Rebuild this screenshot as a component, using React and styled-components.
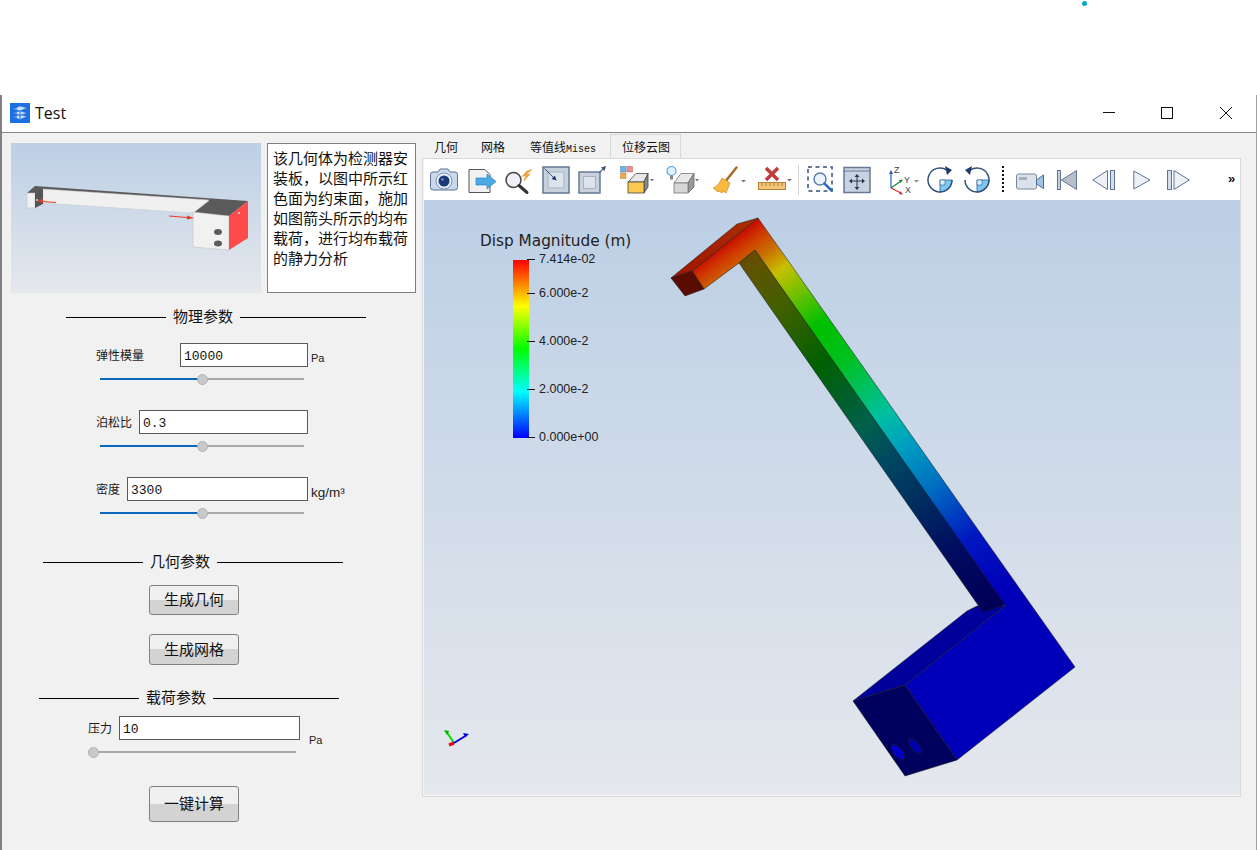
import styled, { createGlobalStyle } from 'styled-components';

const CJK = `"Noto Sans CJK SC", "Liberation Sans", sans-serif`;

const GlobalStyle = createGlobalStyle`
  html, body {
    margin: 0;
    padding: 0;
    background: #fff;
    font-family: ${CJK};
  }
`;

const Page = styled.div`
  position: relative;
  width: 1257px;
  height: 850px;
  padding-top: 95px;
  box-sizing: border-box;
  overflow: hidden;
`;

const TopDot = styled.span`
  position: absolute;
  left: 1082px;
  top: 1px;
  width: 5px;
  height: 5px;
  border-radius: 50%;
  background: #0aa6c8;
`;

const Window = styled.div`
  height: 755px;
  border-left: 2px solid #808085;
  border-right: 1px solid #a0a0a0;
  box-sizing: border-box;
  background: #f1f1f1;
`;

const TitleBar = styled.div`
  display: flex;
  align-items: center;
  height: 38px;
  box-sizing: border-box;
  padding: 0 0 2px 8px;
  background: #fff;
  border-bottom: 1px solid #85858d;
`;

const TitleText = styled.span`
  margin-left: 5px;
  font: 16px "Open Sans", "Liberation Sans", sans-serif;
  color: #111;
`;

const WindowControls = styled.div`
  display: flex;
  margin-left: auto;
  margin-right: 1px;
`;

const WindowButton = styled.svg`
  display: block;
  width: 59px;
  height: 14px;
  fill: none;
  stroke: #111;
  stroke-width: 1;
`;

const Body = styled.div`
  display: flex;
`;

const LeftPanel = styled.div`
  width: 420px;
  flex: none;
  padding-top: 10px;
  box-sizing: border-box;
`;

const IntroRow = styled.div`
  display: flex;
  gap: 6px;
  margin-left: 9px;
`;

const Thumbnail = styled.svg`
  display: block;
  width: 250px;
  height: 150px;
  flex: none;
  background: linear-gradient(#bccfe5, #e5e8ed);
`;

const Description = styled.div`
  width: 149px;
  height: 150px;
  box-sizing: border-box;
  padding: 4px 0 0 5px;
  background: #fff;
  border: 1px solid #808080;
  font-size: 15px;
  line-height: 20px;
  color: #111;
`;

const SectionHeader = styled.div`
  display: grid;
  grid-template-columns: 100px 60px 126px;
  column-gap: 7px;
  align-items: center;
  height: 20px;
  margin-top: ${(p) => p.$top}px;
  margin-left: ${(p) => p.$left}px;
  font-size: 15px;
  line-height: 20px;
  color: #111;
  &::before, &::after {
    content: '';
    height: 1px;
    background: #000;
  }
  & > span {
    margin-top: -2px;
  }
`;

const FieldRow = styled.div`
  display: flex;
  align-items: center;
  height: 24px;
  margin-top: ${(p) => p.$top}px;
  margin-left: ${(p) => p.$left}px;
`;

const FieldLabel = styled.label`
  flex: none;
  width: ${(p) => p.$width}px;
  font-size: 12px;
  line-height: 16px;
  color: #1a1a1a;
`;

const FieldInput = styled.input`
  flex: none;
  width: ${(p) => p.$width}px;
  height: 24px;
  box-sizing: border-box;
  padding: 2px 0 0 3px;
  border: 1px solid #5a5a5a;
  border-radius: 0;
  outline: none;
  background: #fff;
  font: 13px "Liberation Mono", monospace;
  color: #111;
`;

const Unit = styled.span`
  margin-left: ${(p) => p.$gap || 3}px;
  margin-top: ${(p) => p.$drop || 6}px;
  font: ${(p) => p.$size || 11}px "Liberation Sans", sans-serif;
  color: #222;
`;

const SliderTrack = styled.div`
  position: relative;
  width: ${(p) => p.$width}px;
  height: 12px;
  margin-top: 6px;
  margin-left: ${(p) => p.$left}px;
  &::before {
    content: '';
    position: absolute;
    left: 0;
    right: 0;
    top: 5px;
    height: 2px;
    background: linear-gradient(
      to right,
      #0b67bb ${(p) => p.$value}%,
      #a9a9a9 ${(p) => p.$value}%
    );
  }
`;

const SliderThumb = styled.span`
  position: absolute;
  top: 0;
  left: calc((100% - 11px) * ${(p) => p.$value / 100});
  width: 11px;
  height: 11px;
  box-sizing: border-box;
  margin-top: 1px;
  border-radius: 50%;
  background: #c9c9c9;
  border: 1px solid #b2b2b2;
`;

const ActionButton = styled.button`
  display: block;
  width: 90px;
  height: ${(p) => p.$height}px;
  margin-top: ${(p) => p.$top}px;
  margin-left: 147px;
  padding: 0 0 3px;
  border: 1px solid #808080;
  border-radius: 3px;
  background: linear-gradient(#f0f0f0 50%, #d3d3d3 50%);
  font-family: ${CJK};
  font-size: 15px;
  color: #111;
`;

const RightPanel = styled.div`
  width: 819px;
  flex: none;
`;

const Tabs = styled.div`
  display: flex;
  height: 25px;
  padding: 1px 0 0 1px;
  box-sizing: border-box;
`;

const Tab = styled.div`
  height: 25px;
  box-sizing: border-box;
  margin-left: ${(p) => p.$gap || 0}px;
  padding: 0 10px 0 ${(p) => (p.$active ? 11 : 10)}px;
  border: 1px solid ${(p) => (p.$active ? '#d9d9d9' : 'transparent')};
  border-bottom: none;
  font-size: 12px;
  line-height: 23px;
  color: #111;
  white-space: nowrap;
`;

const TabMono = styled.span`
  font: 10px "Liberation Mono", monospace;
`;

const Pane = styled.div`
  height: 639px;
  box-sizing: border-box;
  padding-left: 1px;
  background: #f4f4f4;
  border: 1px solid #d9d9d9;
`;

const Toolbar = styled.div`
  display: flex;
  align-items: flex-start;
  height: 41px;
  box-sizing: border-box;
  padding: 6px 0 0 6px;
  background: #fff;
`;

const ToolIcon = styled.svg`
  display: block;
  flex: none;
  height: 30px;
  width: ${(p) => p.$width}px;
  margin-left: ${(p) => p.$gap}px;
`;

const MoreButton = styled.span`
  margin-left: 38px;
  font: bold 13px/28px "Liberation Sans", sans-serif;
  color: #111;
`;

const Viewport = styled.div`
  position: relative;
  height: 595px;
  background: linear-gradient(#bccfe5, #e5e8ed);
  overflow: hidden;
`;

const Scene = styled.svg`
  position: absolute;
  inset: 0;
  width: 816px;
  height: 595px;
`;

const LegendTitle = styled.div`
  position: absolute;
  left: 56px;
  top: 32px;
  font: 15.3px/18px "DejaVu Sans", sans-serif;
  color: #222;
  white-space: nowrap;
`;

const ColorBar = styled.div`
  position: absolute;
  left: 89px;
  top: 60px;
  width: 16px;
  height: 178px;
  background: linear-gradient(
    #ff0000 0%,
    #ff8000 13%,
    #ffff00 26%,
    #00ff00 50%,
    #00ffff 74%,
    #0080ff 87%,
    #0000ff 100%
  );
`;

const LegendTick = styled.div`
  position: absolute;
  left: 103px;
  top: ${(p) => p.$top}px;
  display: flex;
  align-items: center;
  gap: 4px;
  height: 14px;
  font: 12.5px/14px "Liberation Sans", sans-serif;
  color: #222;
  white-space: nowrap;
  &::before {
    content: '';
    width: 8px;
    height: 1px;
    background: #111;
  }
`;

const tools = [
  { name: 'camera', width: 28, gap: 0, draw: (
    <>
      <path d="M3 7h5l2-3h8l2 3h5a2.500 2.500 0 0 1 2.500 2.500v13a2.500 2.500 0 0 1-2.500 2.500H3a2.500 2.500 0 0 1-2.500-2.500v-13A2.500 2.500 0 0 1 3 7z" fill="#c9d8ec" stroke="#5b7396" />
      <circle cx="14" cy="16" r="8" fill="#e8eef8" stroke="#7d93b3" />
      <circle cx="14" cy="16" r="5.500" fill="#1c3a78" />
      <circle cx="12.500" cy="14.500" r="1.300" fill="#6f8fc8" />
    </>
  ) },
  { name: 'export', width: 28, gap: 10, draw: (
    <>
      <path d="M1 4.500h16l5 5v18H1z" fill="#f1f1f1" stroke="#555" />
      <path d="M8 13h11v-4l9 7.500-9 7.500v-4H8z" fill="#4aa8e2" stroke="#2f86c4" strokeWidth=".7" />
    </>
  ) },
  { name: 'quick-zoom', width: 29, gap: 8, draw: (
    <>
      <circle cx="9.500" cy="15" r="7.500" fill="#eef1f5" stroke="#444" strokeWidth="1.500" />
      <path d="M15 20.500l8 7" stroke="#333" strokeWidth="3" strokeLinecap="round" />
      <path d="M23 6l5-1.500-6 5 4-.5-6 7 2-5.500-4 1z" fill="#f3a73a" stroke="#d98a1e" strokeWidth=".5" />
    </>
  ) },
  { name: 'zoom-in-box', width: 28, gap: 9, draw: (
    <>
      <rect x="1" y="2" width="26" height="26" fill="#c8d2de" stroke="#667a96" strokeWidth="1.500" />
      <rect x="6" y="7" width="16" height="16" fill="#dde3ea" stroke="#a4b3c6" />
      <path d="M2.500 3.500L13 14" stroke="#3d5272" />
      <path d="M14.500 15.500l-5-1.500 3.500-3.500z" fill="#1f3b73" />
    </>
  ) },
  { name: 'zoom-out-box', width: 29, gap: 8, draw: (
    <>
      <rect x="1" y="7" width="21" height="21" fill="#c8d2de" stroke="#667a96" strokeWidth="1.500" />
      <rect x="5.500" y="11.500" width="12" height="12" fill="#dde3ea" stroke="#a4b3c6" />
      <path d="M21 8l5-5" stroke="#5a7090" strokeWidth="1.200" />
      <path d="M28 1l-1.500 5-3.500-3.500z" fill="#3d5272" />
    </>
  ) },
  { name: 'display-mode', width: 34, gap: 13, draw: (
    <>
      <rect x=".5" y="1.500" width="5.500" height="5.500" fill="#6bb3e8" stroke="#4a86b8" strokeWidth=".5" />
      <rect x="7" y="1.500" width="5.500" height="5.500" fill="#e89090" stroke="#b86060" strokeWidth=".5" />
      <rect x=".5" y="8" width="5.500" height="5.500" fill="#f0a850" stroke="#c08030" strokeWidth=".5" />
      <path d="M8 17l8-8.500h12L24 17z" fill="#e8e8e8" stroke="#444" strokeWidth=".8" />
      <path d="M24 17l4-8.500V22l-4 6z" fill="#8a8a8a" stroke="#444" strokeWidth=".8" />
      <rect x="8" y="17" width="16" height="11" fill="#fcc94e" stroke="#444" strokeWidth=".8" />
      <path d="M30 14h4l-2 2.500z" fill="#777" />
    </>
  ) },
  { name: 'lighting', width: 33, gap: 12, draw: (
    <>
      <circle cx="5.500" cy="6" r="4.500" fill="#dff2ff" stroke="#5a9ee0" strokeWidth="1.200" />
      <rect x="4" y="10.500" width="3" height="4" fill="#888" />
      <path d="M8 18l7-9.500h13l-6 9.500z" fill="#e8e8e8" stroke="#777" strokeWidth=".8" />
      <path d="M22 18l6-9.500V22l-6 6z" fill="#9a9a9a" stroke="#666" strokeWidth=".8" />
      <rect x="8" y="18" width="14" height="10" fill="#d6d6d6" stroke="#777" strokeWidth=".8" />
      <path d="M29 14h4l-2 2.500z" fill="#777" />
    </>
  ) },
  { name: 'clear', width: 33, gap: 14, draw: (
    <>
      <path d="M23.500 2.500L13.500 15" stroke="#a86a2c" strokeWidth="2.500" strokeLinecap="round" />
      <path d="M9 13l8 5-4 10-3-2-1 2-3-2-1 1-5-4c4-1 7-6 9-10z" fill="#f6ba41" stroke="#c88a20" strokeWidth=".7" />
      <path d="M28 15h5l-2.500 2.500z" fill="#777" />
    </>
  ) },
  { name: 'measure', width: 34, gap: 12, draw: (
    <>
      <path d="M8 3l12 12M20 3L8 15" stroke="#c23b3b" strokeWidth="3.500" />
      <rect x=".5" y="17.500" width="27" height="7" fill="#f2c477" stroke="#b48534" />
      <path d="M4 18v3M8 18v3M12 18v3M16 18v3M20 18v3M24 18v3" stroke="#a07020" strokeWidth=".8" />
      <path d="M29 14h5l-2.500 2.500z" fill="#777" />
    </>
  ) },
  { name: 'separator', width: 1, gap: 6, draw: <rect width="1" height="30" fill="#d5d5d5" /> },
  { name: 'zoom-area', width: 26, gap: 8, draw: (
    <>
      <rect x="1" y="2" width="24" height="24" fill="none" stroke="#334e7a" strokeWidth="1.500" strokeDasharray="4 3.500" />
      <circle cx="13" cy="14" r="6" fill="#eaf3fb" stroke="#5a7fb0" strokeWidth="1.500" />
      <path d="M17.500 18.500l7 7" stroke="#2a6fc0" strokeWidth="2.500" strokeLinecap="round" />
    </>
  ) },
  { name: 'fit', width: 28, gap: 10, draw: (
    <>
      <rect x="1" y="2.500" width="26" height="25" fill="#c8d3e1" stroke="#667a96" strokeWidth="1.500" />
      <path d="M1 6h26" stroke="#667a96" />
      <path d="M14 9l-2.500 3h5zM14 25l-2.500-3h5zM6 16l3-2.500v5zM22 16l-3-2.500v5z" fill="#27364f" />
      <path d="M14 11v12M8 16h12" stroke="#27364f" />
    </>
  ) },
  { name: 'axes', width: 30, gap: 18, draw: (
    <>
      <path d="M2 23V8" stroke="#2b5fc0" strokeWidth="1.200" />
      <path d="M2 5l-2.200 4h4.400z" fill="#2b5fc0" />
      <path d="M2 23l10-7" stroke="#1b8a3a" strokeWidth="1.200" />
      <path d="M14 14.500l-4.200.5 2 3z" fill="#1b8a3a" />
      <path d="M2 23l10 5" stroke="#d82c2c" strokeWidth="1.200" />
      <path d="M14 29.500l-4.200-.2 1.700-3z" fill="#d82c2c" />
      <text x="5" y="8" fontSize="9" fontFamily="Liberation Sans, sans-serif" fill="#444">Z</text>
      <text x="15" y="17.500" fontSize="9" fontFamily="Liberation Sans, sans-serif" fill="#444">Y</text>
      <text x="16" y="28" fontSize="9" fontFamily="Liberation Sans, sans-serif" fill="#444">X</text>
      <path d="M25 15h5l-2.500 2.500z" fill="#888" />
    </>
  ) },
  { name: 'rotate-cw', width: 26, gap: 8, draw: (
    <>
      <path d="M13 15V27a12 12 0 0 0 12-12z" fill="#7cc8f0" stroke="#2d5f8f" strokeWidth=".8" />
      <path d="M13 15h5v5h-5z" fill="#d6effc" stroke="#2d5f8f" strokeWidth=".6" />
      <path d="M20 5.200A12 12 0 1 0 25 15" fill="none" stroke="#33507a" strokeWidth="1.500" />
      <path d="M18 1l7 4-5 5z" fill="#1f3b6b" />
    </>
  ) },
  { name: 'rotate-ccw', width: 26, gap: 11, draw: (
    <>
      <path d="M13 15V27a12 12 0 0 0 12-12z" fill="#7cc8f0" stroke="#2d5f8f" strokeWidth=".8" />
      <path d="M13 15h5v5h-5z" fill="#d6effc" stroke="#2d5f8f" strokeWidth=".6" />
      <path d="M6 5.200A12 12 0 1 1 1 15" fill="none" stroke="#33507a" strokeWidth="1.500" />
      <path d="M8 1L1 5l5 5z" fill="#1f3b6b" />
    </>
  ) },
  { name: 'dotted-separator', width: 2, gap: 12, draw: <path d="M1 1v26" stroke="#111" strokeWidth="2" strokeDasharray="2 2" /> },
  { name: 'video', width: 28, gap: 12, draw: (
    <>
      <rect x=".5" y="9" width="20" height="15" rx="2" fill="#dbe2ea" stroke="#7488a4" />
      <rect x="3" y="12" width="8" height="3" fill="#a5b0bd" />
      <path d="M20.500 15l7-5v13.500l-7-4.500z" fill="#9fc3e6" stroke="#4f6a8f" />
    </>
  ) },
  { name: 'first-frame', width: 20, gap: 13, draw: (
    <>
      <rect x=".5" y="5.500" width="3" height="19" fill="#c5cfdc" stroke="#5e7595" />
      <path d="M19.500 5.500v19L4.500 15z" fill="#b5bec9" stroke="#5e7595" />
    </>
  ) },
  { name: 'previous-frame', width: 23, gap: 15, draw: (
    <>
      <path d="M15.500 5.500v19L.8 15z" fill="#edf1f6" stroke="#5e7595" />
      <rect x="18.500" y="5.500" width="4" height="19" fill="#d5dde8" stroke="#5e7595" />
    </>
  ) },
  { name: 'play', width: 18, gap: 18, draw: <path d="M.8 6v18L17 15z" fill="#edf1f6" stroke="#5e7595" /> },
  { name: 'last-frame', width: 23, gap: 16, draw: (
    <>
      <rect x=".5" y="5.500" width="4" height="19" fill="#d5dde8" stroke="#5e7595" />
      <path d="M7 5.500v19L22.300 15z" fill="#edf1f6" stroke="#5e7595" />
    </>
  ) },
];

const TitleIcon = () => (
  <svg width="20" height="20" viewBox="0 0 20 20">
    <rect width="20" height="20" fill="#1c70e0" />
    <path d="M3 6l7-3 7 2-7 3zM3 10l7-2 7 2-7 2.500zM3 14l7-2.500 7 2-7 3z" fill="#cfe2fb" stroke="#1c70e0" strokeWidth=".6" />
    <path d="M6 4v12M10 8v8" stroke="#1c70e0" strokeWidth="1" />
  </svg>
);

const BracketThumbnail = () => (
  <Thumbnail viewBox="11 143 250 150">
    <path d="M27 193l8-7 213 15-19 15-36-3 16-12-166-11-8 5z" fill="#5a5a5a" />
    <path d="M43 189l166 11-16 13-150-10z" fill="#f0f0f0" stroke="#c4c8ce" strokeWidth=".5" />
    <path d="M27 193h8v15h-8z" fill="#f1f1f1" stroke="#bbb" strokeWidth=".5" />
    <path d="M35 194l8-5v15l-8 4z" fill="#555" />
    <path d="M193 212l36 4v34l-36-3z" fill="#f1f1f1" stroke="#bbb" strokeWidth=".5" />
    <path d="M229 216l19-15v37l-19 12z" fill="#ff4a4a" />
    <ellipse cx="218" cy="232" rx="4" ry="3" fill="#5c5c5c" />
    <ellipse cx="218" cy="243.500" rx="4" ry="3" fill="#5c5c5c" />
    <circle cx="239" cy="213" r="1" fill="#ddd" />
    <circle cx="37" cy="200" r="1" fill="#ddd" />
    <path d="M56 202.500l-14-1" stroke="#f03a20" strokeWidth="1" />
    <path d="M37 201l6-2v3.500z" fill="#f03a20" />
    <path d="M169 216l18 1.500" stroke="#f03a20" strokeWidth="1" />
    <path d="M194 218l-7-2.500v4z" fill="#f03a20" />
  </Thumbnail>
);

const ArmGradient = ({ id, colors }) => (
  <linearGradient id={id} gradientUnits="userSpaceOnUse" x1="700" y1="240" x2="967" y2="613">
    {colors.map(([offset, color]) => (
      <stop key={offset} offset={offset} stopColor={color} />
    ))}
  </linearGradient>
);

const litStops = [
  [0.04, '#c81000'], [0.07, '#d04000'], [0.106, '#c87000'], [0.155, '#c8c000'], [0.3, '#00c000'],
  [0.4, '#00c020'], [0.54, '#00c0a0'], [0.62, '#00a0c0'], [0.73, '#0070c0'], [0.87, '#0018c0'], [1, '#0000b8'],
];

const darkStops = [
  [0, '#782000'], [0.1, '#645000'], [0.22, '#446000'], [0.37, '#006000'],
  [0.54, '#00604c'], [0.62, '#004a60'], [0.73, '#003060'], [0.87, '#000c60'], [1, '#000058'],
];

const DisplacementModel = () => (
  <Scene viewBox="424 200 816 595">
    <defs>
      <ArmGradient id="lit" colors={litStops} />
      <ArmGradient id="shade" colors={darkStops} />
      <linearGradient id="armTop" x1="0" y1="1" x2="1" y2="0">
        <stop offset="0" stopColor="#a01400" />
        <stop offset="1" stopColor="#a83000" />
      </linearGradient>
    </defs>
    <g stroke="#16161e" strokeWidth=".5" strokeLinejoin="round">
      <path d="M853 701L967 611l10-5h28L905 685z" fill="#00009a" />
      <path d="M692 271l66-53 317 449-118 93-52-75 100-79L755 250l-16 13-35 26z" fill="url(#lit)" />
      <path d="M671 278l66-54 21-6-66 53z" fill="url(#armTop)" />
      <path d="M671 278l21-7 12 18-19 7z" fill="#5a0c00" />
      <path d="M739 263l16-13 250 355-22 7-5-7z" fill="url(#shade)" />
      <path d="M853 701l52-16 52 75-52 16z" fill="#00005e" />
      <ellipse cx="898" cy="752" rx="4.500" ry="9.500" transform="rotate(-40 898 752)" fill="#0000c8" strokeWidth=".8" />
      <ellipse cx="915" cy="746" rx="4.500" ry="9.500" transform="rotate(-40 915 746)" fill="#0000a8" strokeWidth=".8" />
    </g>
    <path d="M454 743L446 731" stroke="#00e000" strokeWidth="2" />
    <path d="M444 730l5 1-2 4z" fill="#00b000" />
    <path d="M454 743l13-8" stroke="#0000e0" strokeWidth="2" />
    <path d="M469 734l-6-1 2 4z" fill="#0000e0" />
    <path d="M454 743l-5 2" stroke="#f00000" strokeWidth="3" />
  </Scene>
);

export default function App() {
  return (
    <Page>
      <GlobalStyle />
      <TopDot />
      <Window>
        <TitleBar>
          <TitleIcon />
          <TitleText>Test</TitleText>
          <WindowControls>
            <WindowButton viewBox="0 0 59 14"><path d="M25 6.500h12" /></WindowButton>
            <WindowButton viewBox="0 0 59 14"><rect x="24.500" y="1.500" width="11" height="11" /></WindowButton>
            <WindowButton viewBox="0 0 59 14"><path d="M24 1l12 12M36 1L24 13" /></WindowButton>
          </WindowControls>
        </TitleBar>
        <Body>
          <LeftPanel>
            <IntroRow>
              <BracketThumbnail />
              <Description>
                该几何体为检测器安装板，以图中所示红色面为约束面，施加如图箭头所示的均布载荷，进行均布载荷的静力分析
              </Description>
            </IntroRow>

            <SectionHeader $top={14} $left={64}><span>物理参数</span></SectionHeader>
            <FieldRow $top={16} $left={94}>
              <FieldLabel $width={84}>弹性模量</FieldLabel>
              <FieldInput $width={128} value="10000" readOnly />
              <Unit>Pa</Unit>
            </FieldRow>
            <SliderTrack $width={204} $left={98} $value={50}><SliderThumb $value={50} /></SliderTrack>

            <FieldRow $top={25} $left={94}>
              <FieldLabel $width={43}>泊松比</FieldLabel>
              <FieldInput $width={169} value="0.3" readOnly />
            </FieldRow>
            <SliderTrack $width={204} $left={98} $value={50}><SliderThumb $value={50} /></SliderTrack>

            <FieldRow $top={25} $left={94}>
              <FieldLabel $width={31}>密度</FieldLabel>
              <FieldInput $width={181} value="3300" readOnly />
              <Unit $size={13.5}>kg/m³</Unit>
            </FieldRow>
            <SliderTrack $width={204} $left={98} $value={50}><SliderThumb $value={50} /></SliderTrack>

            <SectionHeader $top={33} $left={41}><span>几何参数</span></SectionHeader>
            <ActionButton $top={13} $height={30}>生成几何</ActionButton>
            <ActionButton $top={19} $height={31}>生成网格</ActionButton>

            <SectionHeader $top={23} $left={37}><span>载荷参数</span></SectionHeader>
            <FieldRow $top={8} $left={86}>
              <FieldLabel $width={31}>压力</FieldLabel>
              <FieldInput $width={181} value="10" readOnly />
              <Unit $gap={9} $drop={24}>Pa</Unit>
            </FieldRow>
            <SliderTrack $width={208} $left={86} $value={0}><SliderThumb $value={0} /></SliderTrack>

            <ActionButton $top={28} $height={36}>一键计算</ActionButton>
          </LeftPanel>

          <RightPanel>
            <Tabs>
              <Tab>几何</Tab>
              <Tab $gap={1}>网格</Tab>
              <Tab $gap={3}>等值线<TabMono>Mises</TabMono></Tab>
              <Tab $gap={3} $active>位移云图</Tab>
            </Tabs>
            <Pane>
              <Toolbar>
                {tools.map((tool) => (
                  <ToolIcon
                    key={tool.name}
                    $width={tool.width}
                    $gap={tool.gap}
                    viewBox={`0 0 ${tool.width} 30`}
                  >
                    {tool.draw}
                  </ToolIcon>
                ))}
                <MoreButton>»</MoreButton>
              </Toolbar>
              <Viewport>
                <DisplacementModel />
                <LegendTitle>Disp Magnitude (m)</LegendTitle>
                <ColorBar />
                <LegendTick $top={52}>7.414e-02</LegendTick>
                <LegendTick $top={86}>6.000e-2</LegendTick>
                <LegendTick $top={134}>4.000e-2</LegendTick>
                <LegendTick $top={182}>2.000e-2</LegendTick>
                <LegendTick $top={230}>0.000e+00</LegendTick>
              </Viewport>
            </Pane>
          </RightPanel>
        </Body>
      </Window>
    </Page>
  );
}
